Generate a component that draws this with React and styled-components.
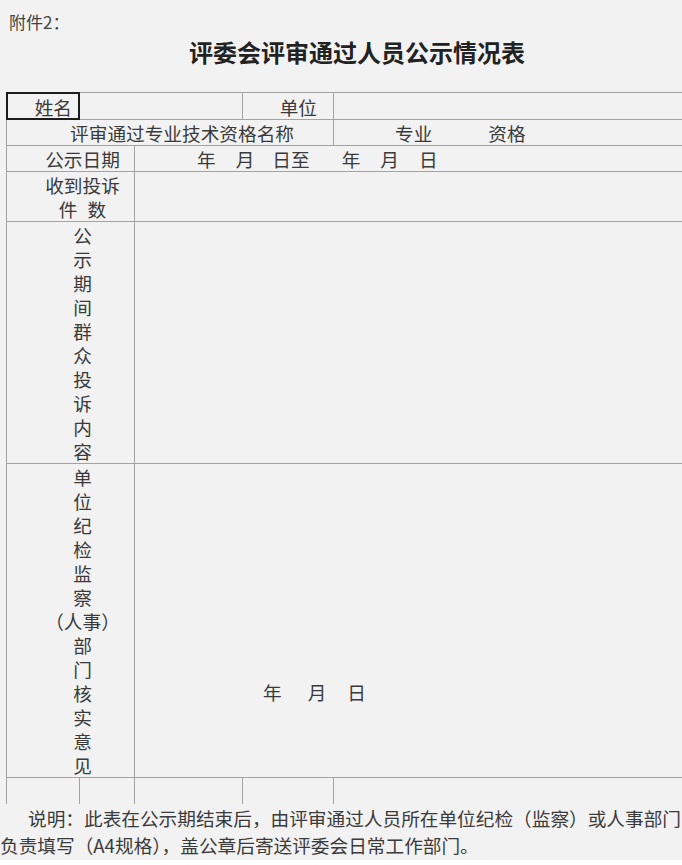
import React from 'react'
import styled, { createGlobalStyle } from 'styled-components'

const GlobalStyle = createGlobalStyle`
  html, body {
    margin:0;
    padding:0;
    background:#fff;
    overflow:hidden;
  }
  body {
    width:682px;
    font-family:"Noto Sans CJK SC", "Liberation Sans", sans-serif;
    color:#333;
  }
`

const Page = styled.div`
    width:682px;
    background:#f2f2f2;
    overflow:hidden;
`

const Attach = styled.div`
    padding:10px 0 0 9px;
    font-size:17px;
    line-height:24px;
    color:#444;
`

const Title = styled.h1`
    margin:0;
    height:58px;
    line-height:36px;
    text-align:center;
    font-size:24px;
    font-weight:700;
    color:#222;
    padding-left:32px;
`

const Table = styled.table`
    margin-left:6px;
    width:680px;
    table-layout:fixed;
    border-collapse:collapse;
    font-size:18.67px;
    line-height:24px;
    color:#3a3a3a;
`

const Cell = styled.td`
    border:1px solid #a3a3a3;
    padding:1px 0 0;
    height:${p => p.$h || 24}px;
    text-align:${p => p.$align || 'left'};
    vertical-align:${p => p.$valign || 'middle'};
    padding-left:${p => p.$pl || 0}px;
    padding-right:${p => p.$pr || 0}px;
    padding-bottom:${p => p.$pb || 0}px;
    white-space:nowrap;
    position:relative;
`

const LastCell = styled(Cell)`
    border-bottom:none;
`

const NameCell = styled(Cell)`
    &::after {
      content:'';
      position:absolute;
      left:-1px;
      top:-1px;
      right:-1px;
      bottom:-1px;
      border:2px solid #1c1c1c;
      pointer-events:none;
    }
`

const Label = styled.span`
    display:inline-block;
    margin-left:${p => p.$ml || 0}px;
`

const Stack = styled.div`
    display:flex;
    flex-direction:column;
    align-items:center;
`

const Line = styled.span`
    display:block;
    height:24px;
`

const Note = styled.p`
    margin:0;
    padding:0 0 2px;
    text-indent:28px;
    font-size:18.67px;
    line-height:27px;
    color:#3a3a3a;
`

const complaint = ['公', '示', '期', '间', '群', '众', '投', '诉', '内', '容']
const review = ['单', '位', '纪', '检', '监', '察', '（人事）', '部', '门', '核', '实', '意', '见']

const dates = [
  ['年', 62], ['月', 20], ['日至', 18], ['年', 32], ['月', 20], ['日', 20]
]

export default () => (
  <Page>
    <GlobalStyle />
    <Attach>附件2：</Attach>
    <Title>评委会评审通过人员公示情况表</Title>
    <Table>
      <colgroup>
        <col style={{ width: 73 }} />
        <col style={{ width: 55 }} />
        <col style={{ width: 108 }} />
        <col style={{ width: 91 }} />
        <col style={{ width: 353 }} />
      </colgroup>
      <tbody>
        <tr>
          <NameCell $align="right" $pr={7} $h={25}>姓名</NameCell>
          <Cell colSpan={2} />
          <Cell $align="right" $pr={16}>单位</Cell>
          <Cell />
        </tr>
        <tr>
          <Cell colSpan={4} $align="center" $pl={24}>评审通过专业技术资格名称</Cell>
          <Cell>
            <Label $ml={61}>专业</Label>
            <Label $ml={56}>资格</Label>
          </Cell>
        </tr>
        <tr>
          <Cell colSpan={2} $align="center" $pl={24}>公示日期</Cell>
          <Cell colSpan={3}>
            {dates.map(([t, ml], i) => <Label key={i} $ml={ml}>{t}</Label>)}
          </Cell>
        </tr>
        <tr>
          <Cell colSpan={2} $pl={24} $h={48}>
            <Stack>
              <Line>收到投诉</Line>
              <Line>件<Label $ml={10}>数</Label></Line>
            </Stack>
          </Cell>
          <Cell colSpan={3} />
        </tr>
        <tr>
          <Cell colSpan={2} $pl={24} $h={240}>
            <Stack>
              {complaint.map((c, i) => <Line key={i}>{c}</Line>)}
            </Stack>
          </Cell>
          <Cell colSpan={3} />
        </tr>
        <tr>
          <Cell colSpan={2} $pl={24} $h={312}>
            <Stack>
              {review.map((c, i) => <Line key={i}>{c}</Line>)}
            </Stack>
          </Cell>
          <Cell colSpan={3} $valign="bottom" $pb={73}>
            <Label $ml={128}>年</Label>
            <Label $ml={26}>月</Label>
            <Label $ml={21}>日</Label>
          </Cell>
        </tr>
        <tr>
          <LastCell $h={25} />
          <LastCell />
          <LastCell />
          <LastCell />
          <LastCell />
        </tr>
      </tbody>
    </Table>
    <Note>
      说明：此表在公示期结束后，由评审通过人员所在单位纪检（监察）或人事部门负责填写（A4规格），盖公章后寄送评委会日常工作部门。
    </Note>
  </Page>
)
